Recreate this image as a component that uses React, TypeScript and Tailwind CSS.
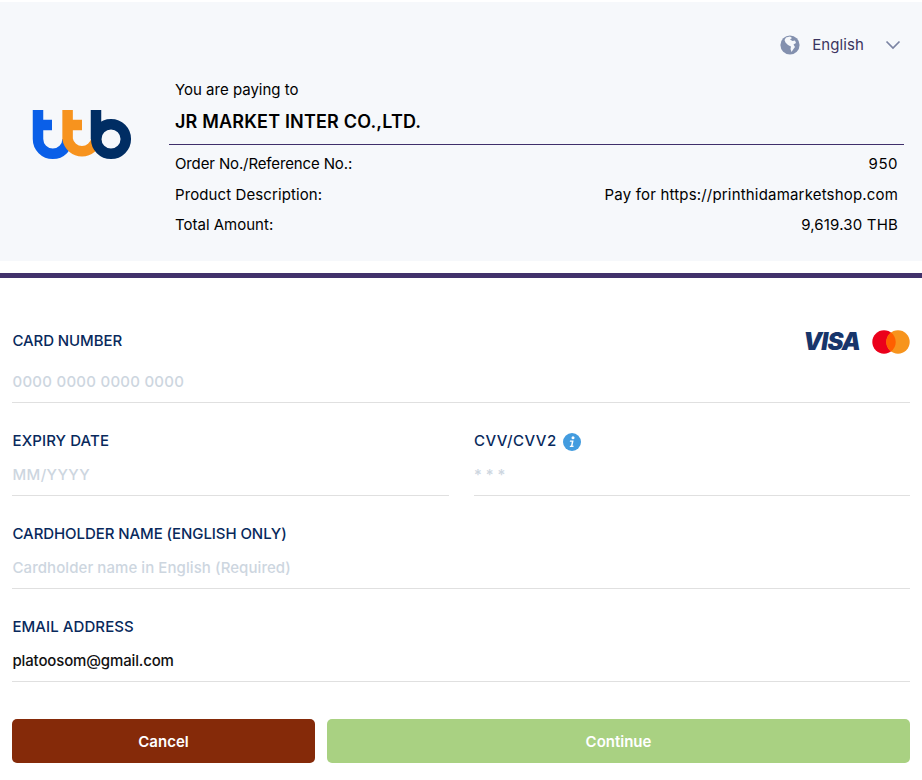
const fontFamily = "font-['Inter','Liberation_Sans',sans-serif]";

const TtbLogo = () => (
  <svg width="100" height="50" viewBox="32 110 100 50" fill="none" strokeWidth="10.5">
    <path d="M38 110V139A14.8 14.8 0 0 0 67.6 139" stroke="#0a5fe8" />
    <path d="M38 125H52" stroke="#0a5fe8" />
    <path d="M67.6 110V139A14.6 14.6 0 0 0 96.4 139" stroke="#f7931e" />
    <path d="M67.6 125H82" stroke="#f7931e" />
    <path d="M96 110V139" stroke="#002d63" />
    <circle cx="111" cy="139" r="14.8" stroke="#002d63" />
  </svg>
);

const Globe = () => (
  <svg width="20" height="20" viewBox="0 0 20 20">
    <circle cx="10" cy="10" r="9.6" fill="#8390ae" />
    <path
      d="M6 2.5 10 1.5 12 3 10 4.5 12.5 6 15 5.5 16 8 13.5 9.5 15 12 13.5 14 11.5 17 10.5 14 11 11.5 8 10 5.5 7.5 4.5 5Z"
      fill="#f6f8fb"
    />
  </svg>
);

const Chevron = () => (
  <svg width="16" height="10" viewBox="0 0 16 10" fill="none">
    <path d="M1.5 1.5 8 8 14.5 1.5" stroke="#7b84a3" strokeWidth="1.7" />
  </svg>
);

const VisaMark = () => (
  <span className="text-[24px] leading-none font-black tracking-[-0.9px] text-[#17356b] italic">
    VISA
  </span>
);

const Mastercard = () => (
  <svg width="38" height="24" viewBox="0 0 38 24">
    <circle cx="12" cy="12" r="11.7" fill="#eb001b" />
    <circle cx="26" cy="12" r="11.7" fill="#f7941d" />
    <path d="M19 2.6a11.7 11.7 0 0 1 0 18.8a11.7 11.7 0 0 1 0-18.8Z" fill="#ff5f00" />
  </svg>
);

const InfoIcon = () => (
  <svg width="18" height="18" viewBox="0 0 18 18">
    <circle cx="9" cy="9" r="9" fill="#439cdf" />
    <circle cx="10" cy="4.8" r="1.5" fill="#fff" />
    <path d="M7 7.6h3.6L9.5 12.7h1.2l-.3 1.2H6.7l.3-1.2h1L8.8 8.8H6.8Z" fill="#fff" />
  </svg>
);

type RowProps = {
  label: string;
  value: string;
  className?: string;
  labelClass?: string;
  valueClass?: string;
};

const SummaryRow = ({ label, value, className, labelClass, valueClass }: RowProps) => (
  <div className={`flex h-[30px] items-center justify-between px-[6px] ${className ?? ""}`}>
    <span className={labelClass}>{label}</span>
    <span className={valueClass}>{value}</span>
  </div>
);

type FieldProps = {
  label: React.ReactNode;
  value: string;
  filled?: boolean;
  aside?: React.ReactNode;
  className?: string;
  labelClass?: string;
  valueClass?: string;
};

const Field = ({ label, value, filled, aside, className, labelClass, valueClass }: FieldProps) => (
  <div className={`border-b border-[#e0e0e0] ${className ?? ""}`}>
    <div
      className={`flex h-[27px] items-center justify-between pl-[0.5px] text-[15px] font-[450] text-[#08295c] ${labelClass ?? ""}`}
    >
      <div className="flex items-center gap-[6px]">{label}</div>
      {aside}
    </div>
    <div
      className={`h-[25px] pl-[0.5px] text-[15px] leading-[25px] font-[450] ${valueClass ?? "mt-[7px]"} ${filled ? "text-[#111]" : "text-[#cdd6df]"}`}
    >
      {value}
    </div>
  </div>
);

export default function App() {
  return (
    <div className={`${fontFamily} h-[780px] w-[922px] overflow-hidden bg-white pt-[2px]`}>
      <header className="flex h-[259px] bg-[#f6f8fb] text-[15px] text-black">
        <div className="flex w-[169px] shrink-0 items-start pl-[32px] pt-[108px]">
          <TtbLogo />
        </div>
        <div className="flex-1 pr-[18px]">
          <div className="flex h-[78px] items-start justify-end pr-[3px] pt-[32px] text-[#3c3460]">
            <div className="flex items-center">
              <Globe />
              <span className="ml-[12px] mr-[21px] tracking-[0.1px]">English</span>
              <Chevron />
            </div>
          </div>
          <div className="pl-[6px] leading-[20px]">You are paying to</div>
          <div className="mt-[10px] h-[35px] border-b border-[#3f2f6b] pl-[6px] text-[18px] leading-[24px] font-semibold tracking-[0.18px]">
            JR MARKET INTER CO.,LTD.
          </div>
          <div className="mt-[4px]">
            <SummaryRow
              label="Order No./Reference No.:"
              value="950"
              labelClass="tracking-[-0.13px]"
              valueClass="tracking-[0.5px]"
            />
            <SummaryRow
              label="Product Description:"
              value="Pay for https://printhidamarketshop.com"
              className="mt-[1px]"
              labelClass="tracking-[0.1px]"
              valueClass="tracking-[0.18px]"
            />
            <SummaryRow label="Total Amount:" value="9,619.30 THB" valueClass="tracking-[0.18px]" />
          </div>
        </div>
      </header>

      <div className="mt-[12px] h-[5px] bg-[#41316b]" />

      <form className="px-[12px] pt-[50px]">
        <Field
          label="CARD NUMBER"
          value="0000 0000 0000 0000"
          className="h-[75px]"
          labelClass="tracking-[-0.1px]"
          valueClass="mt-[14px] tracking-[0.25px]"
          aside={
            <div className="flex items-center gap-[12px]">
              <VisaMark />
              <Mastercard />
            </div>
          }
        />
        <div className="mt-[25px] grid grid-cols-2 gap-[25px]">
          <Field
            label="EXPIRY DATE"
            value="MM/YYYY"
            className="h-[68px]"
            labelClass="tracking-[0.1px]"
            valueClass="mt-[7px] tracking-[0.4px]"
          />
          <Field
            label={
              <>
                <span className="tracking-[0.45px]">CVV/CVV2</span>
                <InfoIcon />
              </>
            }
            value="* * *"
            className="h-[68px]"
          />
        </div>
        <Field
          label="CARDHOLDER NAME (ENGLISH ONLY)"
          value="Cardholder name in English (Required)"
          className="mt-[25px] h-[68px]"
          labelClass="tracking-[-0.08px]"
          valueClass="mt-[7px] tracking-[0.07px]"
        />
        <Field
          label="EMAIL ADDRESS"
          value="platoosom@gmail.com"
          filled
          className="mt-[25px] h-[68px]"
          labelClass="tracking-[0.07px]"
          valueClass="mt-[7px] tracking-[-0.15px]"
        />
        <div className="mt-[37px] flex gap-[12px]">
          <button type="button" className="h-[44px] w-[303px] rounded-[5px] bg-[#852a09] pt-[2px] text-[15px] font-semibold text-white">
            Cancel
          </button>
          <button type="button" className="h-[44px] flex-1 rounded-[5px] bg-[#a9d182] pt-[2px] text-[15px] font-semibold text-white">
            Continue
          </button>
        </div>
      </form>
    </div>
  );
}
